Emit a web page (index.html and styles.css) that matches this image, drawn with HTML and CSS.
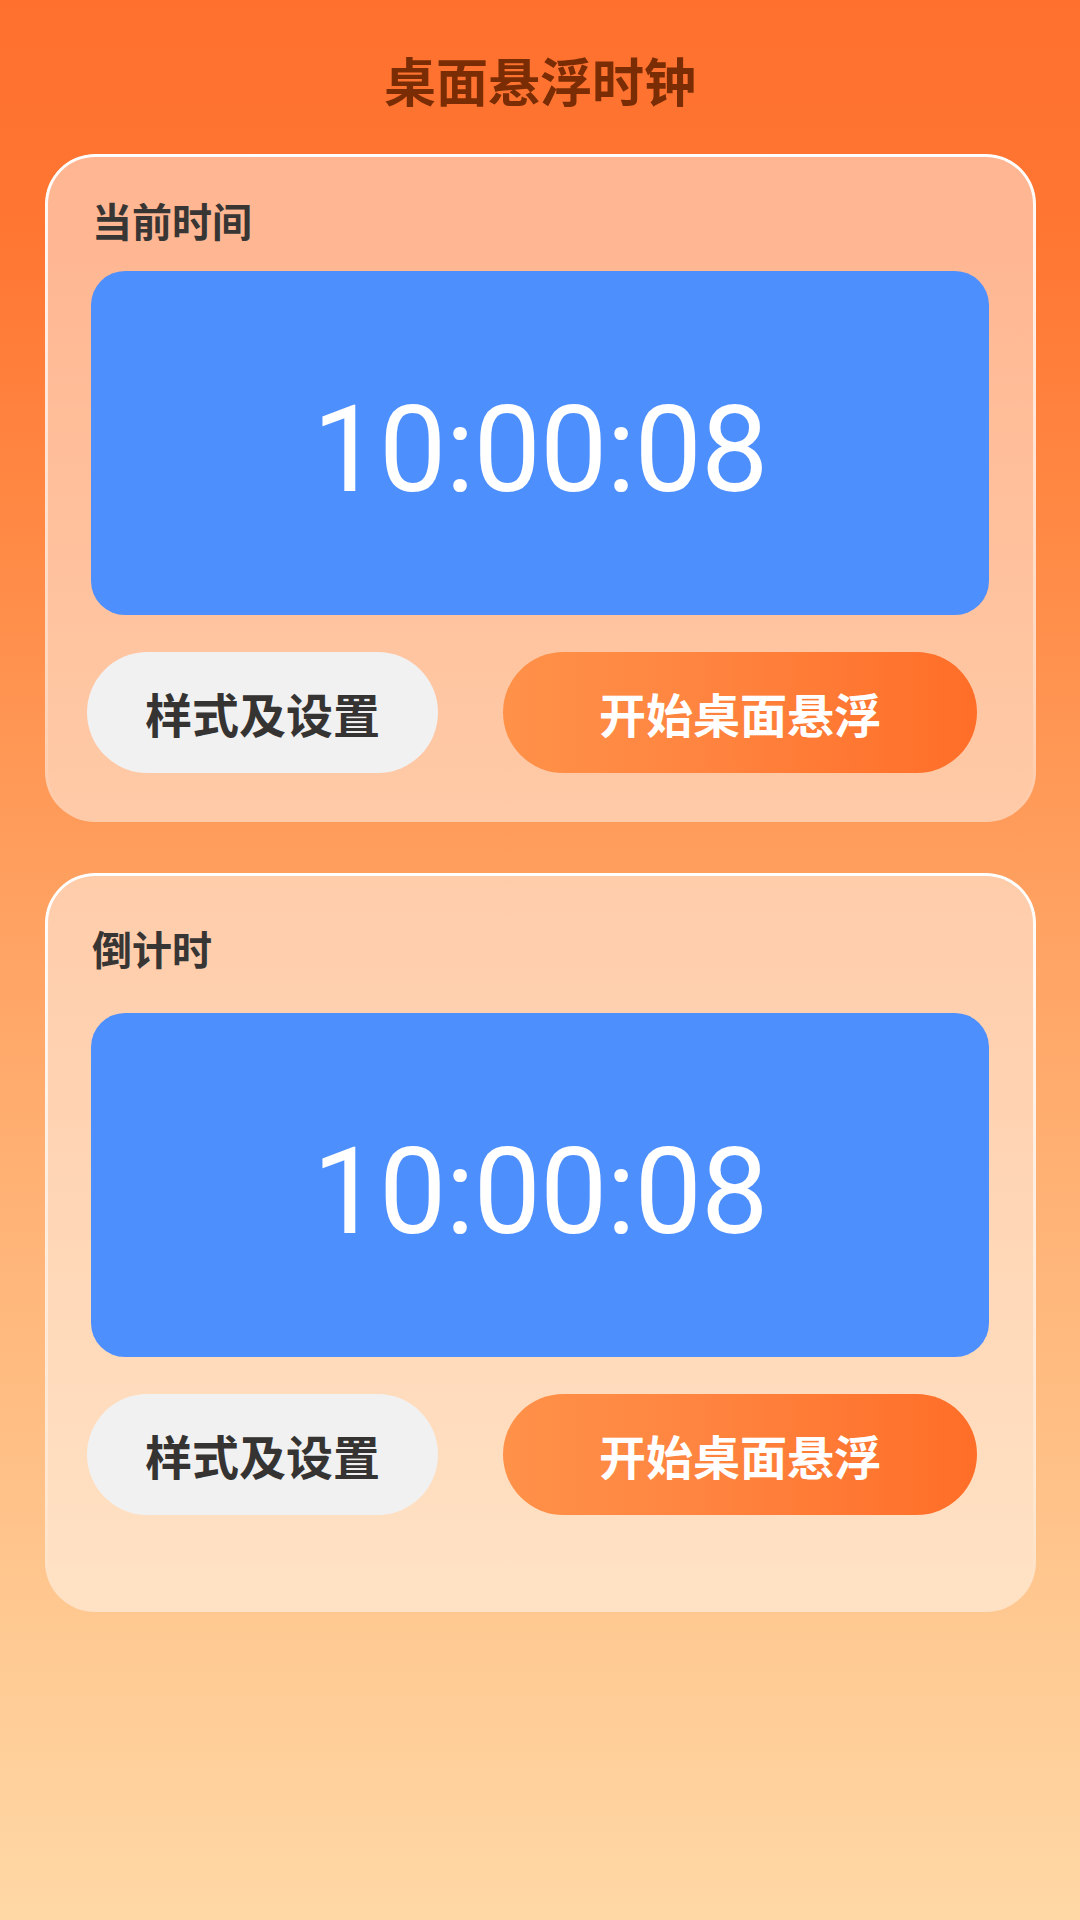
FILE: index.html
```html
<!DOCTYPE html>
<html lang="zh-CN">
<head>
<meta charset="utf-8">
<title>桌面悬浮时钟</title>
<link rel="stylesheet" href="styles.css">
</head>
<body>
<div class="page">
  <h1 class="title">桌面悬浮时钟</h1>

  <section class="card card--clock">
    <h2 class="card-label">当前时间</h2>
    <div class="display"><span class="time">10:00:08</span></div>
    <div class="actions">
      <button class="btn btn-ghost">样式及设置</button>
      <button class="btn btn-primary">开始桌面悬浮</button>
    </div>
  </section>

  <section class="card card--countdown">
    <h2 class="card-label">倒计时</h2>
    <div class="display"><span class="time">10:00:08</span></div>
    <div class="actions">
      <button class="btn btn-ghost">样式及设置</button>
      <button class="btn btn-primary">开始桌面悬浮</button>
    </div>
  </section>
</div>
</body>
</html>
```

FILE: styles.css
```css
* { box-sizing: border-box; }

html, body {
  margin: 0;
  padding: 0;
}

body {
  width: 1080px;
  height: 1920px;
  overflow: hidden;
  font-family: "Noto Sans CJK SC", "Noto Sans", sans-serif;
  background: linear-gradient(180deg,
    #ff702e 0%,
    #ff7632 12%,
    #ff8a45 28%,
    #ffa262 48%,
    #ffb87c 68%,
    #ffc992 85%,
    #ffd8a5 100%);
}

.page {
  display: flex;
  flex-direction: column;
  height: 1920px;
}

.title {
  margin: 0;
  padding-top: 54px;
  height: 154px;
  font-size: 52px;
  line-height: 52px;
  font-weight: 700;
  color: #7a2c04;
  text-align: center;
}

.card {
  position: relative;
  margin-left: 45px;
  width: 991px;
  border-radius: 50px;
  background: rgba(255, 255, 255, 0.47);
  display: flex;
  flex-direction: column;
}

.card::before {
  content: "";
  position: absolute;
  inset: 0;
  border-radius: inherit;
  padding: 3px;
  background: linear-gradient(180deg,
    rgba(255, 255, 255, 1) 0%,
    rgba(255, 255, 255, 0.7) 30%,
    rgba(255, 255, 255, 0.3) 80%,
    rgba(255, 255, 255, 0) 100%);
  -webkit-mask: linear-gradient(#000 0 0) content-box, linear-gradient(#000 0 0);
  -webkit-mask-composite: xor;
  mask-composite: exclude;
  pointer-events: none;
}

.card--clock {
  padding: 46px 0 49px;
}

.card--countdown {
  margin-top: 51px;
  padding: 55px 0 97px;
}

.card-label {
  margin: 0;
  padding-left: 47px;
  font-size: 40px;
  line-height: 40px;
  font-weight: 700;
  color: #383635;
}

.display {
  margin: 31px 47px 0 46px;
  height: 344px;
  padding-top: 14px;
  border-radius: 34px;
  background: #4e8ffe;
  display: flex;
  align-items: center;
  justify-content: center;
}

.card--countdown .display {
  margin-top: 45px;
}

.time {
  font-family: Roboto, "Noto Sans", sans-serif;
  font-weight: 400;
  font-size: 120px;
  line-height: 1;
  color: #ffffff;
  letter-spacing: -1px;
}

.actions {
  margin-top: 37px;
  padding-left: 42px;
  display: flex;
  gap: 65px;
}

.btn {
  height: 121px;
  border: none;
  border-radius: 61px;
  font-family: "Noto Sans CJK SC", "Noto Sans", sans-serif;
  font-size: 47px;
  font-weight: 700;
  padding: 0;
  display: flex;
  align-items: center;
  justify-content: center;
}

.btn-ghost {
  width: 351px;
  background: #f1f1f1;
  color: #363432;
}

.btn-primary {
  width: 474px;
  background: linear-gradient(90deg, #ff9149 0%, #ff8540 40%, #ff6e28 100%);
  color: #ffffff;
}
```
